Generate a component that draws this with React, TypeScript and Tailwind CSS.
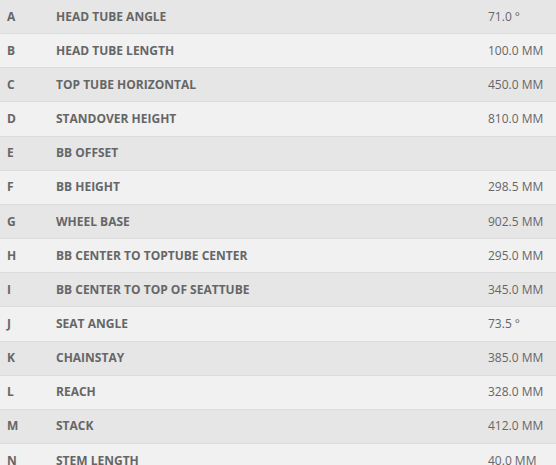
const rows: [string, string, string][] = [
  ["A", "HEAD TUBE ANGLE", "71.0 °"],
  ["B", "HEAD TUBE LENGTH", "100.0 MM"],
  ["C", "TOP TUBE HORIZONTAL", "450.0 MM"],
  ["D", "STANDOVER HEIGHT", "810.0 MM"],
  ["E", "BB OFFSET", ""],
  ["F", "BB HEIGHT", "298.5 MM"],
  ["G", "WHEEL BASE", "902.5 MM"],
  ["H", "BB CENTER TO TOPTUBE CENTER", "295.0 MM"],
  ["I", "BB CENTER TO TOP OF SEATTUBE", "345.0 MM"],
  ["J", "SEAT ANGLE", "73.5 °"],
  ["K", "CHAINSTAY", "385.0 MM"],
  ["L", "REACH", "328.0 MM"],
  ["M", "STACK", "412.0 MM"],
  ["N", "STEM LENGTH", "40.0 MM"],
];

export default function App() {
  return (
    <div className="w-[556px] h-[465px] overflow-hidden bg-white font-['Open_Sans',sans-serif] text-[12px] text-[#666]">
      {rows.map(([letter, label, value], i) => (
        <div
          key={letter}
          className={`flex h-[34.17px] items-center border-b border-[#dcdcdc] ${i % 2 === 0 ? "bg-[#e6e6e6]" : "bg-[#f1f1f1]"}`}
        >
          <div className="w-[56px] pl-[7px] font-bold">{letter}</div>
          <div className="flex-1 font-bold">{label}</div>
          <div className="w-[68px]">{value}</div>
        </div>
      ))}
    </div>
  );
}
